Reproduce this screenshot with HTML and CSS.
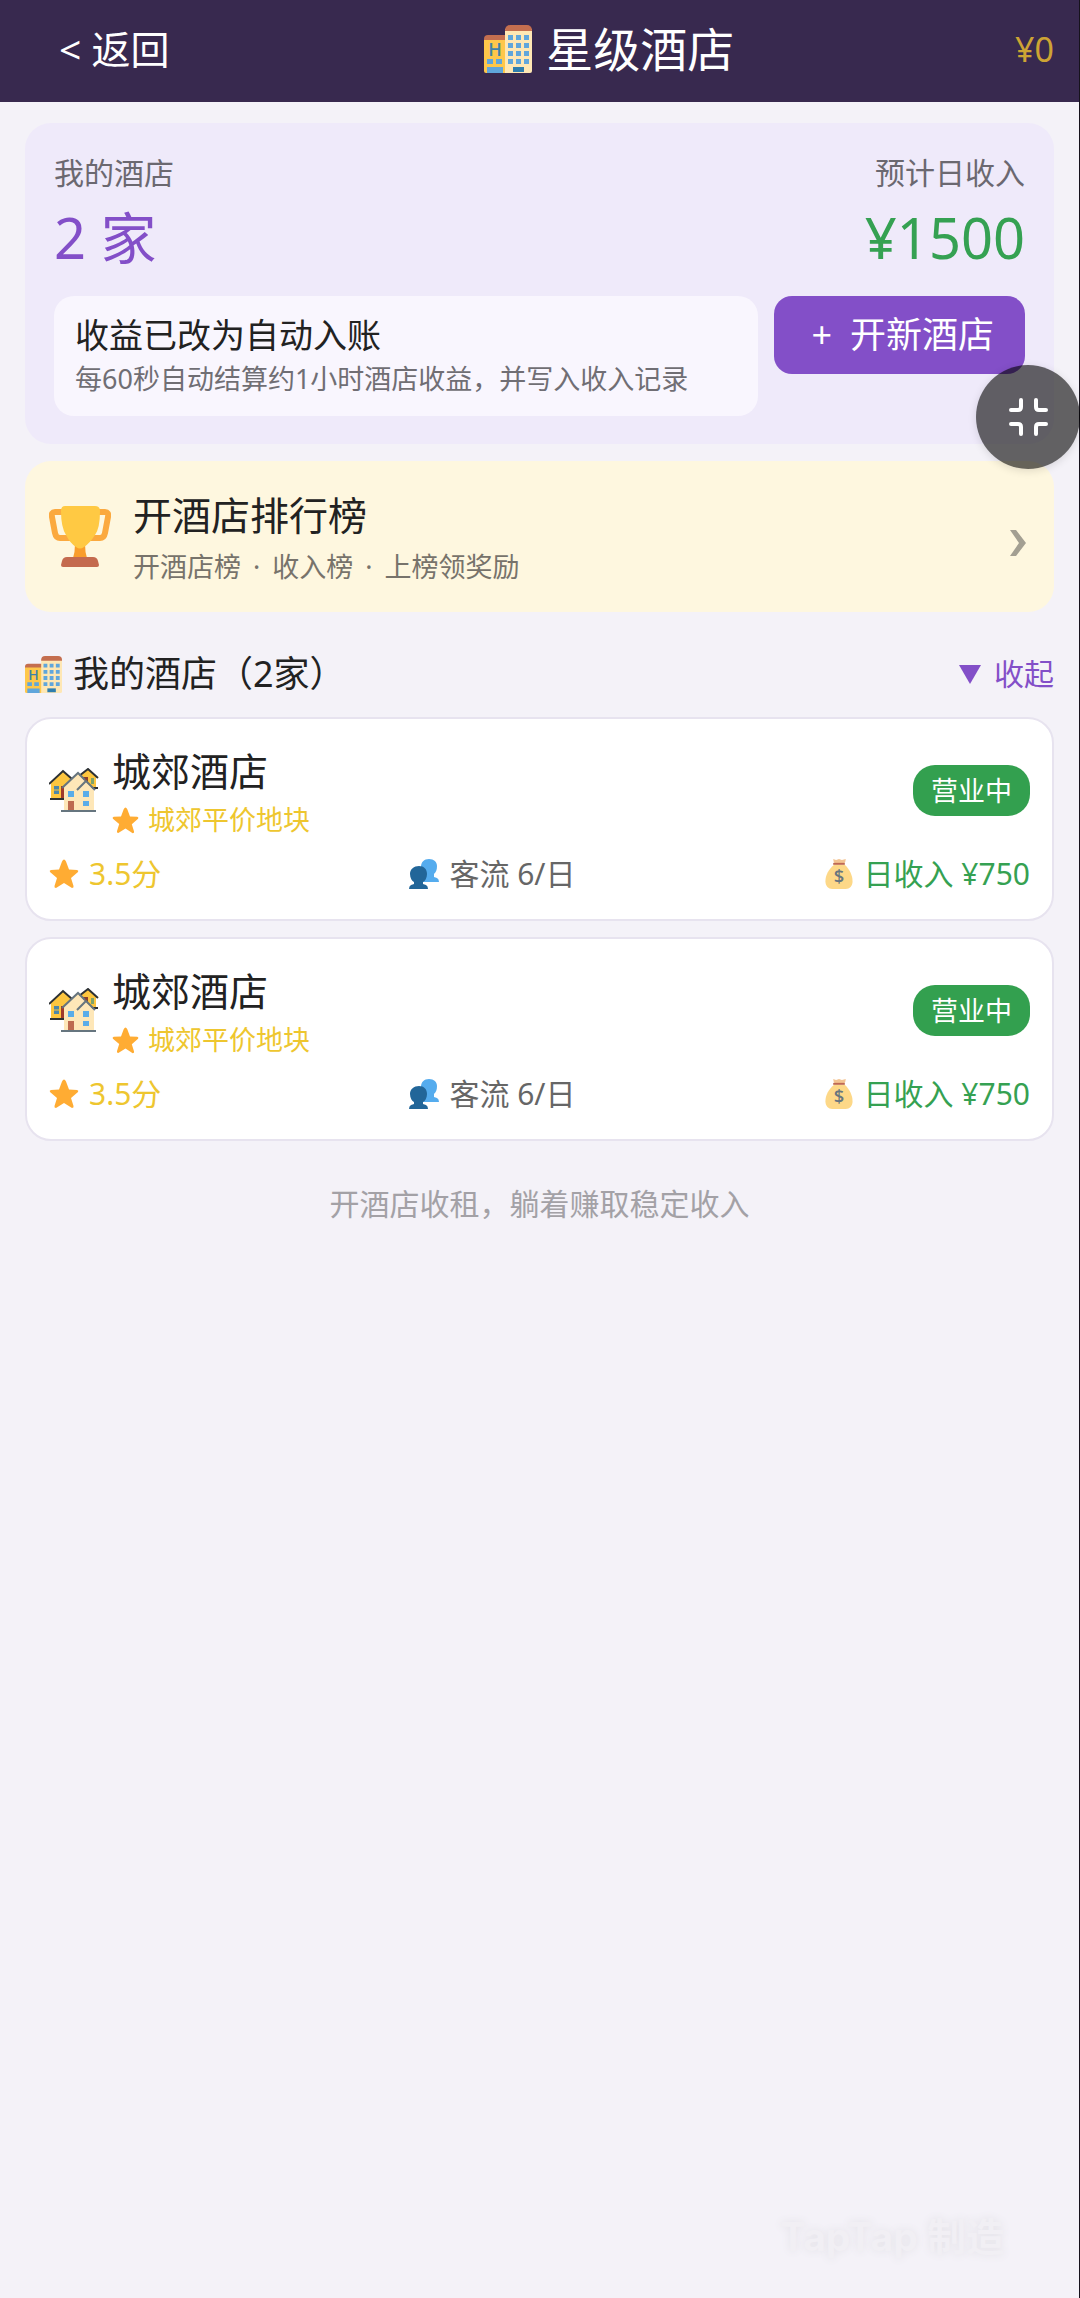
FILE: index.html
```html
<!DOCTYPE html>
<html lang="zh-CN">
<head>
<meta charset="utf-8">
<meta name="viewport" content="width=device-width, initial-scale=1">
<title>星级酒店</title>
<link rel="stylesheet" href="styles.css">
</head>
<body>
<svg class="sprite" aria-hidden="true">
  <defs>
    <symbol id="hotel" viewBox="0 0 48 48">
      <path fill="#fec74a" d="M0 14h22v34H2a2 2 0 0 1-2-2z"/>
      <path fill="#c46e4f" d="M0 15v-1a4 4 0 0 1 4-4h18v5z"/>
      <path fill="#fee7b4" d="M21 4h27v42a2 2 0 0 1-2 2H21z"/>
      <path fill="#c46e4f" d="M21 6V5a5 5 0 0 1 5-5h17a5 5 0 0 1 5 5v1z"/>
      <path fill="#5fa6dc" d="M3 34h6v5H3zM12 34h6v5h-6zM3 42h16v6H3zM24 10h5v5h-5zM32 10h5v5h-5zM40 10h5v5h-5zM24 18h5v5h-5zM32 18h5v5h-5zM40 18h5v5h-5zM24 26h5v5h-5zM32 26h5v5h-5zM40 26h5v5h-5zM24 34h5v5h-5zM32 34h5v5h-5zM40 34h5v5h-5z"/>
      <path fill="#2e7eae" d="M29 42h11v5H29z"/>
      <text class="glyph" x="11" y="31" font-size="18" fill="#3f82a8">H</text>
    </symbol>
    <symbol id="trophy" viewBox="0 0 62 62">
      <path fill="none" stroke="#fba93f" stroke-width="6" d="M16 6H6Q2 6 3 11l3 16q1 5 5 5h11M46 6h10q4 0 3 5l-3 16q-1 5-5 5H40"/>
      <path fill="#f99d2b" d="M26 38h10q0 8 2 14H24q2-6 2-14z"/>
      <path fill="#ffc943" d="M16 0h30q5 0 5 5 0 17-5 24-5 8-11 12-4 3-8 0-6-4-10-12-5-8-5-24 0-5 4-5z"/>
      <path fill="#c46a4e" d="M18 51h26q4 0 5 4l1 4q0 2-2 2H14q-2 0-2-2l1-4q1-4 5-4z"/>
    </symbol>
    <symbol id="houses" viewBox="0 0 50 44">
      <path fill="#fdc63f" d="M32 7l7-6 8 7v12H32z"/>
      <path fill="#8b3f2b" d="M34 9h5v5h-5z"/><path fill="#7ea36a" d="M42 10h3v6h-3z"/>
      <path fill="none" stroke="#2d3134" stroke-width="2" d="M30 8l9-7 10 9M40 20h9"/>
      <path fill="#fdc63f" d="M2 15L14 3l10 9v19H2z"/>
      <path fill="#4c87a8" d="M5 18h5v8H5z"/><path stroke="#fdc63f" d="M5 22h5"/><path fill="#a0392b" d="M12 18h4v12h-4z"/>
      <path fill="none" stroke="#2d3134" stroke-width="2" d="M0 16L14 3l9 8M1 31h14"/>
      <path fill="#fee7b8" d="M15 18L28 5l9 9 8 8v20H15z"/>
      <path fill="none" stroke="#66757f" stroke-width="2" d="M13 20L29 5l7 7M28 22l9-9 9 9M12 43h35"/>
      <path fill="#5aace8" d="M19 23h6v6h-6zM34 23h6v6h-6zM34 33h6v5h-6z"/>
      <path fill="#bd6a4f" d="M19 33h6v9h-6z"/>
    </symbol>
    <symbol id="star" viewBox="0 0 30 29">
      <path fill="#ffac33" d="M15 0q1 0 2 2l3 8 8 .4q2 .6 1 2.200l-7 6 2.500 8q.5 2-1.500 2L15 23.500l-8 5q-2 0-1.500-2l2.500-8-7-6Q0 11 2 10.400L10 10l3-8q1-2 2-2z"/>
    </symbol>
    <symbol id="guests" viewBox="0 0 30 30">
      <path fill="#55acee" d="M20 0c5 0 8 3 8 7 0 4-1 6-3 8v3l3 1q2 1 2 4H12V8c0-5 3-8 8-8z"/>
      <path fill="#226699" d="M10 7c5 0 8 3 8 8 0 4-2 7-4 8v2l3 1q2 1 2 4H0q0-3 2-4l3-1v-2c-2-1-4-4-4-8 0-5 4-8 9-8z"/>
    </symbol>
    <symbol id="bag" viewBox="0 0 28 31">
      <path fill="#fdd888" d="M9 6C3 11 0 17 0 23c0 5 3 8 7 8h14c4 0 7-3 7-8 0-6-3-12-8-17z"/>
      <path fill="#f3c391" d="M8 0l3 1 3-1 3 1 4-1q0 3-2 5H10Q8 3 8 0z"/>
      <path fill="#bf6952" d="M8 4h12v2H8z"/>
      <text class="glyph" x="14" y="25" font-size="19" fill="#67757f">$</text>
    </symbol>
  </defs>
</svg>

<div class="app">
  <header class="topbar">
    <button class="back" type="button">&lt; 返回</button>
    <h1 class="title"><svg class="title-icon" aria-hidden="true"><use href="#hotel"/></svg>星级酒店</h1>
    <span class="balance">¥0</span>
  </header>

  <main class="content">
    <section class="summary">
      <div class="figures">
        <div class="figure">
          <div class="figure-label">我的酒店</div>
          <div class="figure-value">2 家</div>
        </div>
        <div class="figure income">
          <div class="figure-label">预计日收入</div>
          <div class="figure-value">¥1500</div>
        </div>
      </div>
      <div class="actions">
        <div class="notice">
          <div class="notice-title">收益已改为自动入账</div>
          <div class="notice-text">每60秒自动结算约1小时酒店收益，并写入收入记录</div>
        </div>
        <button class="open-new" type="button"><span>+</span><span>开新酒店</span></button>
      </div>
    </section>

    <a class="ranking" href="#ranking">
      <svg class="ranking-icon" aria-hidden="true"><use href="#trophy"/></svg>
      <span class="ranking-body">
        <span class="ranking-title">开酒店排行榜</span>
        <span class="ranking-text">开酒店榜<span class="dot"> · </span>收入榜<span class="dot"> · </span>上榜领奖励</span>
      </span>
      <svg class="chevron" viewBox="0 0 16 26" aria-hidden="true"><path d="M0 0h6l10 13L6 26H0l9-13z"/></svg>
    </a>

    <div class="list-head">
      <h2 class="list-title"><svg class="list-icon" aria-hidden="true"><use href="#hotel"/></svg>我的酒店（2家）</h2>
      <button class="toggle" type="button"><svg class="caret" viewBox="0 0 22 19" aria-hidden="true"><path d="M0 0h22L11 19z"/></svg>收起</button>
    </div>

    <div class="list">
      <article class="hotel">
        <div class="hotel-head">
          <svg class="hotel-icon" aria-hidden="true"><use href="#houses"/></svg>
          <div class="hotel-info">
            <h3 class="hotel-name">城郊酒店</h3>
            <div class="hotel-plot"><svg class="plot-icon" aria-hidden="true"><use href="#star"/></svg>城郊平价地块</div>
          </div>
          <span class="status">营业中</span>
        </div>
        <div class="stats">
          <span class="stat rating"><svg class="stat-icon" aria-hidden="true"><use href="#star"/></svg>3.5分</span>
          <span class="stat"><svg class="stat-icon" aria-hidden="true"><use href="#guests"/></svg>客流 6/日</span>
          <span class="stat earn"><svg class="stat-icon" aria-hidden="true"><use href="#bag"/></svg>日收入 ¥750</span>
        </div>
      </article>
      <article class="hotel">
        <div class="hotel-head">
          <svg class="hotel-icon" aria-hidden="true"><use href="#houses"/></svg>
          <div class="hotel-info">
            <h3 class="hotel-name">城郊酒店</h3>
            <div class="hotel-plot"><svg class="plot-icon" aria-hidden="true"><use href="#star"/></svg>城郊平价地块</div>
          </div>
          <span class="status">营业中</span>
        </div>
        <div class="stats">
          <span class="stat rating"><svg class="stat-icon" aria-hidden="true"><use href="#star"/></svg>3.5分</span>
          <span class="stat"><svg class="stat-icon" aria-hidden="true"><use href="#guests"/></svg>客流 6/日</span>
          <span class="stat earn"><svg class="stat-icon" aria-hidden="true"><use href="#bag"/></svg>日收入 ¥750</span>
        </div>
      </article>
    </div>

    <p class="tip">开酒店收租，躺着赚取稳定收入</p>
  </main>

  <button class="fab" type="button" aria-label="退出全屏">
    <svg class="fab-icon" viewBox="0 0 40 40" aria-hidden="true"><path d="M13 3v7q0 3-3 3H3M28 3v7q0 3 3 3h7M13 37v-7q0-3-3-3H3M28 37v-7q0-3 3-3h7"/></svg>
  </button>
  <div class="watermark">TapTap 制造</div>
</div>
</body>
</html>
```
FILE: styles.css
```css
* {
  box-sizing: border-box;
}

body,
h1,
h2,
h3,
p {
  margin: 0;
  font-weight: 400;
}

body {
  background: #f4f2f8;
  color: #222;
  font-family: "Noto Sans", "Noto Sans CJK SC", sans-serif;
}

button {
  border: 0;
  padding: 0;
  background: none;
  color: inherit;
  font: inherit;
  cursor: pointer;
}

svg {
  flex: none;
}

.sprite {
  position: absolute;
  width: 0;
  height: 0;
}

.glyph {
  font-family: "Open Sans", sans-serif;
  font-weight: 600;
  text-anchor: middle;
}

.app {
  position: relative;
  min-height: 100vh;
  border-right: 1px solid #16121c;
}

.topbar {
  display: flex;
  align-items: center;
  justify-content: space-between;
  padding: 15px 25px 19px;
  background: #38294f;
  color: #fff;
}

.back {
  padding: 0 34px;
  font-size: 39px;
  line-height: 68px;
}

.title {
  display: flex;
  align-items: center;
  gap: 14px;
  font-size: 47px;
  line-height: 68px;
}

.title-icon {
  width: 48px;
  height: 48px;
}

.balance {
  color: #cda434;
  font-size: 34px;
  line-height: 68px;
}

.content {
  padding: 21px 25px;
}

.summary {
  padding: 28px 29px;
  border-radius: 26px;
  background: #efeafa;
}

.figures {
  display: flex;
  justify-content: space-between;
}

.figure {
  color: #834fc8;
}

.income {
  color: #35a152;
  text-align: right;
}

.figure-label {
  color: #6b6870;
  font-size: 30px;
  line-height: 44px;
}

.figure-value {
  font-size: 56px;
  line-height: 84px;
}

.actions {
  display: flex;
  align-items: flex-start;
  gap: 16px;
  margin-top: 17px;
}

.notice {
  flex: 1;
  padding: 16px 21px;
  border-radius: 20px;
  background: #f9f6fe;
}

.notice-title {
  font-size: 34px;
  line-height: 46px;
}

.notice-text {
  color: #706e74;
  font-size: 27px;
  line-height: 42px;
}

.open-new {
  display: flex;
  gap: 18px;
  padding: 0 31px 0 37px;
  border-radius: 18px;
  background: #834fc8;
  color: #fff;
  font-size: 36px;
  line-height: 78px;
}

.ranking {
  display: flex;
  align-items: center;
  gap: 22px;
  margin-top: 17px;
  padding: 24px 28px 24px 24px;
  border-radius: 26px;
  background: #fef7df;
  color: inherit;
  text-decoration: none;
}

.ranking-icon {
  width: 62px;
  height: 62px;
}

.ranking-body {
  display: flex;
  flex: 1;
  flex-direction: column;
}

.ranking-title {
  font-size: 39px;
  line-height: 60px;
}

.ranking-text {
  color: #77736b;
  font-size: 27px;
  line-height: 43px;
}

.dot {
  padding: 0 5px;
}

.chevron {
  width: 16px;
  height: 26px;
  margin-top: 12px;
  fill: #a39f92;
}

.list-head {
  display: flex;
  align-items: center;
  justify-content: space-between;
  margin: 36px 0 17px;
  line-height: 52px;
}

.list-title {
  display: flex;
  align-items: center;
  gap: 11px;
  font-size: 36px;
}

.list-icon {
  width: 37px;
  height: 37px;
}

.toggle {
  display: flex;
  align-items: center;
  gap: 13px;
  color: #834fc8;
  font-size: 30px;
}

.caret {
  width: 22px;
  height: 19px;
  fill: currentColor;
}

.list {
  display: grid;
  gap: 16px;
}

.hotel {
  padding: 22px;
  border: 2px solid #e7e3ef;
  border-radius: 26px;
  background: #fff;
}

.hotel-head {
  display: flex;
  align-items: center;
}

.hotel-icon {
  width: 50px;
  height: 44px;
}

.hotel-info {
  flex: 1;
  padding-left: 13px;
}

.hotel-name {
  font-size: 39px;
  line-height: 60px;
}

.hotel-plot {
  display: flex;
  align-items: center;
  gap: 9px;
  color: #eec62f;
  font-size: 27px;
  line-height: 38px;
}

.plot-icon {
  width: 27px;
  height: 27px;
}

.status {
  padding: 0 18px;
  border-radius: 22px;
  background: #33a04f;
  color: #fff;
  font-size: 27px;
  line-height: 51px;
}

.stats {
  display: flex;
  justify-content: space-between;
  margin-top: 12px;
  color: #666;
  font-size: 30px;
  line-height: 46px;
}

.stat {
  display: flex;
  align-items: center;
  gap: 10px;
}

.stat-icon {
  width: 30px;
  height: 30px;
}

.rating {
  color: #eec62f;
}

.earn {
  color: #35a152;
}

.tip {
  margin-top: 41px;
  color: #a3a1a6;
  font-size: 30px;
  line-height: 44px;
  text-align: center;
}

.fab {
  position: absolute;
  top: 365px;
  right: -1px;
  display: flex;
  align-items: center;
  justify-content: center;
  width: 104px;
  height: 104px;
  border-radius: 50%;
  background: rgba(0, 0, 0, 0.6);
  box-shadow: 0 2px 8px rgba(0, 0, 0, 0.12);
}

.fab-icon {
  width: 40px;
  height: 40px;
  fill: none;
  stroke: #fff;
  stroke-width: 4;
  stroke-linecap: round;
}

.watermark {
  position: absolute;
  right: 74px;
  bottom: 32px;
  color: #f1eff4;
  font-family: Inter, "Noto Sans CJK SC", sans-serif;
  font-size: 39px;
  font-weight: 700;
  line-height: 58px;
  text-shadow: 0 0 8px #e4e2e8;
}
```
